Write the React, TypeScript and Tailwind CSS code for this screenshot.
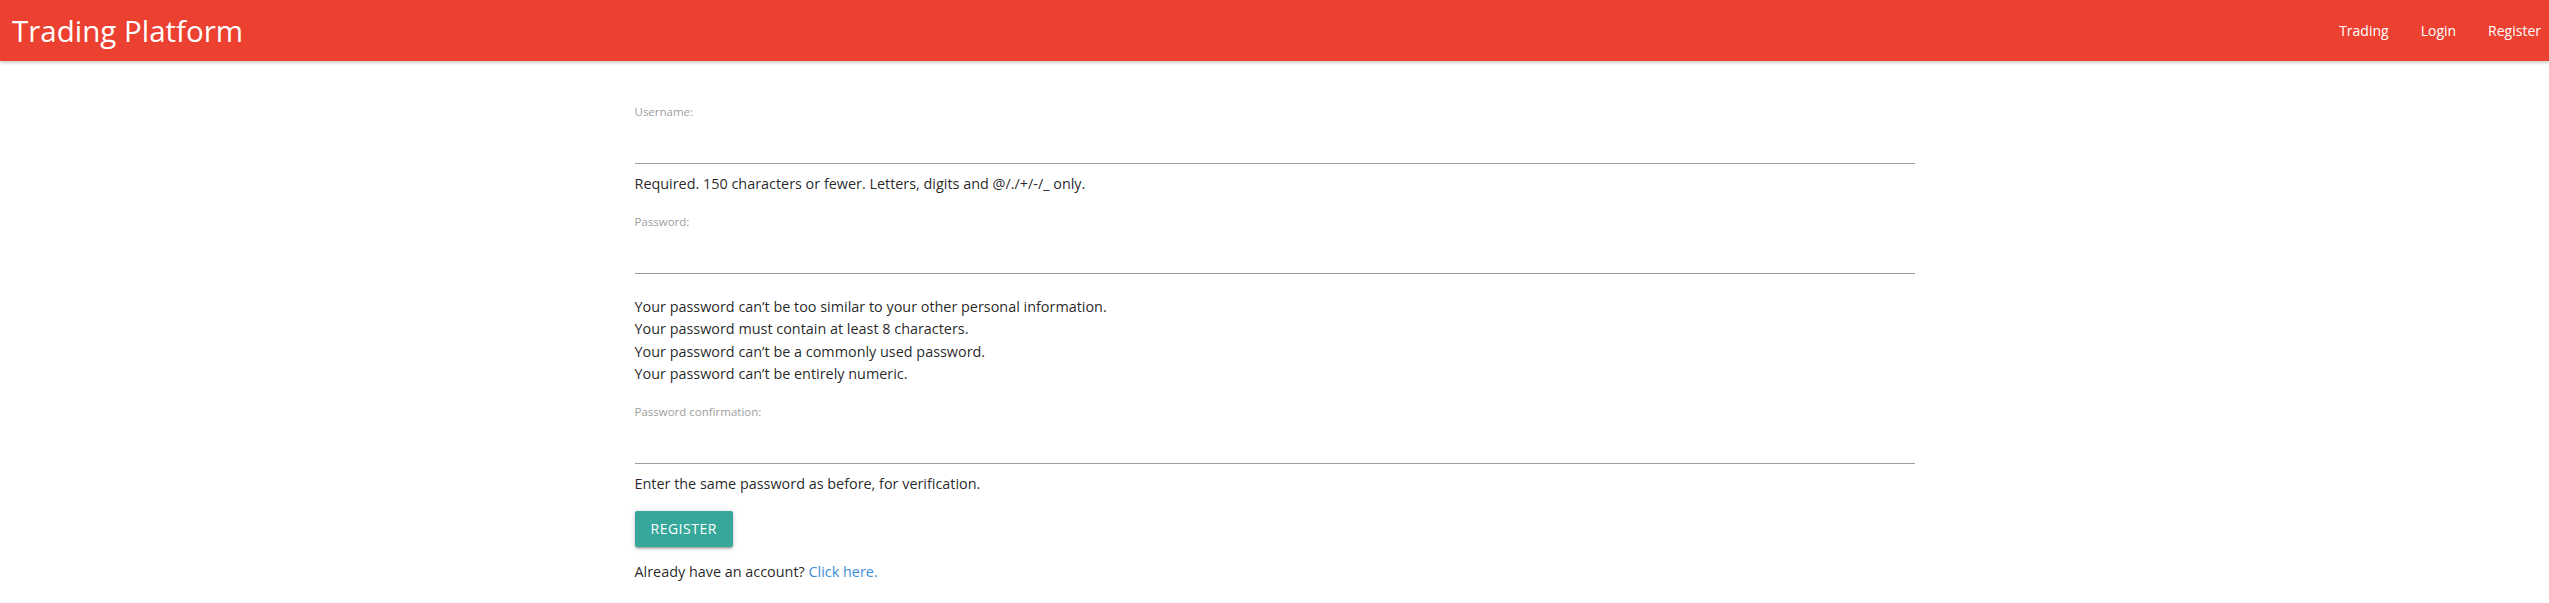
import React from 'react';

const font = { fontFamily: '"Open Sans", "Noto Sans", Arial, sans-serif' };

function Field({ label, type }: { label: string; type: string }) {
  return (
    <div>
      <label className="block text-[11.5px] leading-[15px] text-[#9e9e9e]">{label}</label>
      <input
        type={type}
        className="block w-full h-[45px] border-b border-[#9e9e9e] bg-transparent outline-none"
      />
    </div>
  );
}

export default function App() {
  return (
    <div className="min-h-screen bg-white text-[rgba(0,0,0,0.87)]" style={font}>
      {/* navbar */}
      <nav className="h-[61px] bg-[#ec4131] flex items-center justify-between shadow-[0_2px_3px_rgba(0,0,0,0.2)] relative z-10">
        <a href="#" className="pl-[12px] text-[29.5px] leading-none text-white">Trading Platform</a>
        <ul className="flex items-center gap-[32px] pr-[8px] text-[14px] text-white">
          <li><a href="#">Trading</a></li>
          <li><a href="#">Login</a></li>
          <li><a href="#">Register</a></li>
        </ul>
      </nav>

      <main className="mx-auto w-full max-w-[1280px] pt-[43px]">
        <form className="text-[14.4px] leading-[22.5px]">
          <Field label="Username:" type="text" />
          <p className="mt-[9px]">Required. 150 characters or fewer. Letters, digits and @/./+/-/_ only.</p>

          <div className="mt-[18px]">
            <Field label="Password:" type="password" />
          </div>
          <ul className="mt-[22px]">
            <li>Your password can’t be too similar to your other personal information.</li>
            <li>Your password must contain at least 8 characters.</li>
            <li>Your password can’t be a commonly used password.</li>
            <li>Your password can’t be entirely numeric.</li>
          </ul>

          <div className="mt-[18px]">
            <Field label="Password confirmation:" type="password" />
          </div>
          <p className="mt-[9px]">Enter the same password as before, for verification.</p>

          <button
            type="button"
            className="mt-[16px] h-[36px] px-[16px] rounded-[2px] bg-[#36a89b] text-white text-[14px] uppercase tracking-[0.5px] shadow-[0_2px_2px_rgba(0,0,0,0.14),0_3px_1px_-2px_rgba(0,0,0,0.12),0_1px_5px_rgba(0,0,0,0.2)]"
          >
            Register
          </button>

          <p className="mt-[14px]">
            Already have an account? <a href="#" className="text-[#3d8fd6]">Click here.</a>
          </p>
        </form>
      </main>
    </div>
  );
}
